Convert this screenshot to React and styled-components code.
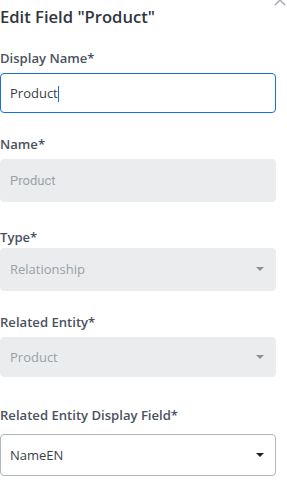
import React from 'react'
import styled, { createGlobalStyle } from 'styled-components'

const Global = createGlobalStyle`
    html, body {
        margin:0;
        padding:0;
        background:#fff;
        font-family:"Open Sans", sans-serif;
    }
`;

const Panel = styled.div`
    position:relative;
    width:287px;
    padding:6px 11px 0 0;
    box-sizing:border-box;
`;

const Collapse = styled.svg`
    position:absolute;
    top:-3px;
    right:0;
`;

const Title = styled.h1`
    margin:0 0 22px 0;
    font-size:16.6px;
    line-height:22px;
    font-weight:600;
    color:#2f3640;
`;

const Group = styled.div`
    margin-bottom:${props => props.gap ?? 24}px;
`;

const Label = styled.label`
    display:block;
    font-size:13.1px;
    line-height:17px;
    font-weight:600;
    color:#4a5260;
    margin-bottom:${props => props.gap ?? 6}px;
`;

const Box = styled.div`
    height:${props => props.h || 40}px;
    box-sizing:border-box;
    border-radius:4px;
    display:flex;
    align-items:center;
    justify-content:space-between;
    padding:0 11px 0 9px;
    font-size:13px;
    background:${props => props.disabled ? '#eaecee' : '#fff'};
    color:${props => props.disabled ? '#9aa1a9' : '#3a3f45'};
    border:1px solid ${props => props.focused ? '#1a6fe0' : props.disabled ? '#eaecee' : '#aeb6bf'};
    font-family:${props => props.roboto ? 'Roboto, sans-serif' : '"Open Sans", sans-serif'};
`;

const Caret = styled.span`
    width:0;
    height:0;
    border-left:4.5px solid transparent;
    border-right:4.5px solid transparent;
    border-top:4.5px solid ${props => props.dark ? '#222' : '#8b929a'};
`;

const Cursor = styled.span`
    display:inline-block;
    width:1px;
    height:16px;
    background:#1a6fe0;
    vertical-align:middle;
`;

const fields = [
    { label: 'Name*', value: 'Product', roboto: true, h: 43, gap: 26.5 },
    { label: 'Type*', value: 'Relationship', select: true, h: 43, gap: 23.5, labelGap: 2 },
    { label: 'Related Entity*', value: 'Product', select: true, h: 40, gap: 29.5 },
];

const App = () => {
    return (
        <Panel>
            <Global />
            <Collapse width="14" height="10" viewBox="0 0 14 10">
                <path d="M2 8 L7 3 L12 8" fill="none" stroke="#9aa1aa" strokeWidth="1.3" />
            </Collapse>
            <Title>Edit Field "Product"</Title>
            <Group gap={23}>
                <Label>Display Name*</Label>
                <Box focused>
                    <span>Product<Cursor /></span>
                </Box>
            </Group>
            {fields.map(f => (
                <Group key={f.label} gap={f.gap}>
                    <Label gap={f.labelGap}>{f.label}</Label>
                    <Box disabled roboto={f.roboto} h={f.h}>
                        <span>{f.value}</span>
                        {f.select && <Caret />}
                    </Box>
                </Group>
            ))}
            <Group>
                <Label gap={10}>Related Entity Display Field*</Label>
                <Box h={42}>
                    <span>NameEN</span>
                    <Caret dark />
                </Box>
            </Group>
        </Panel>
    )
}

export default App;
